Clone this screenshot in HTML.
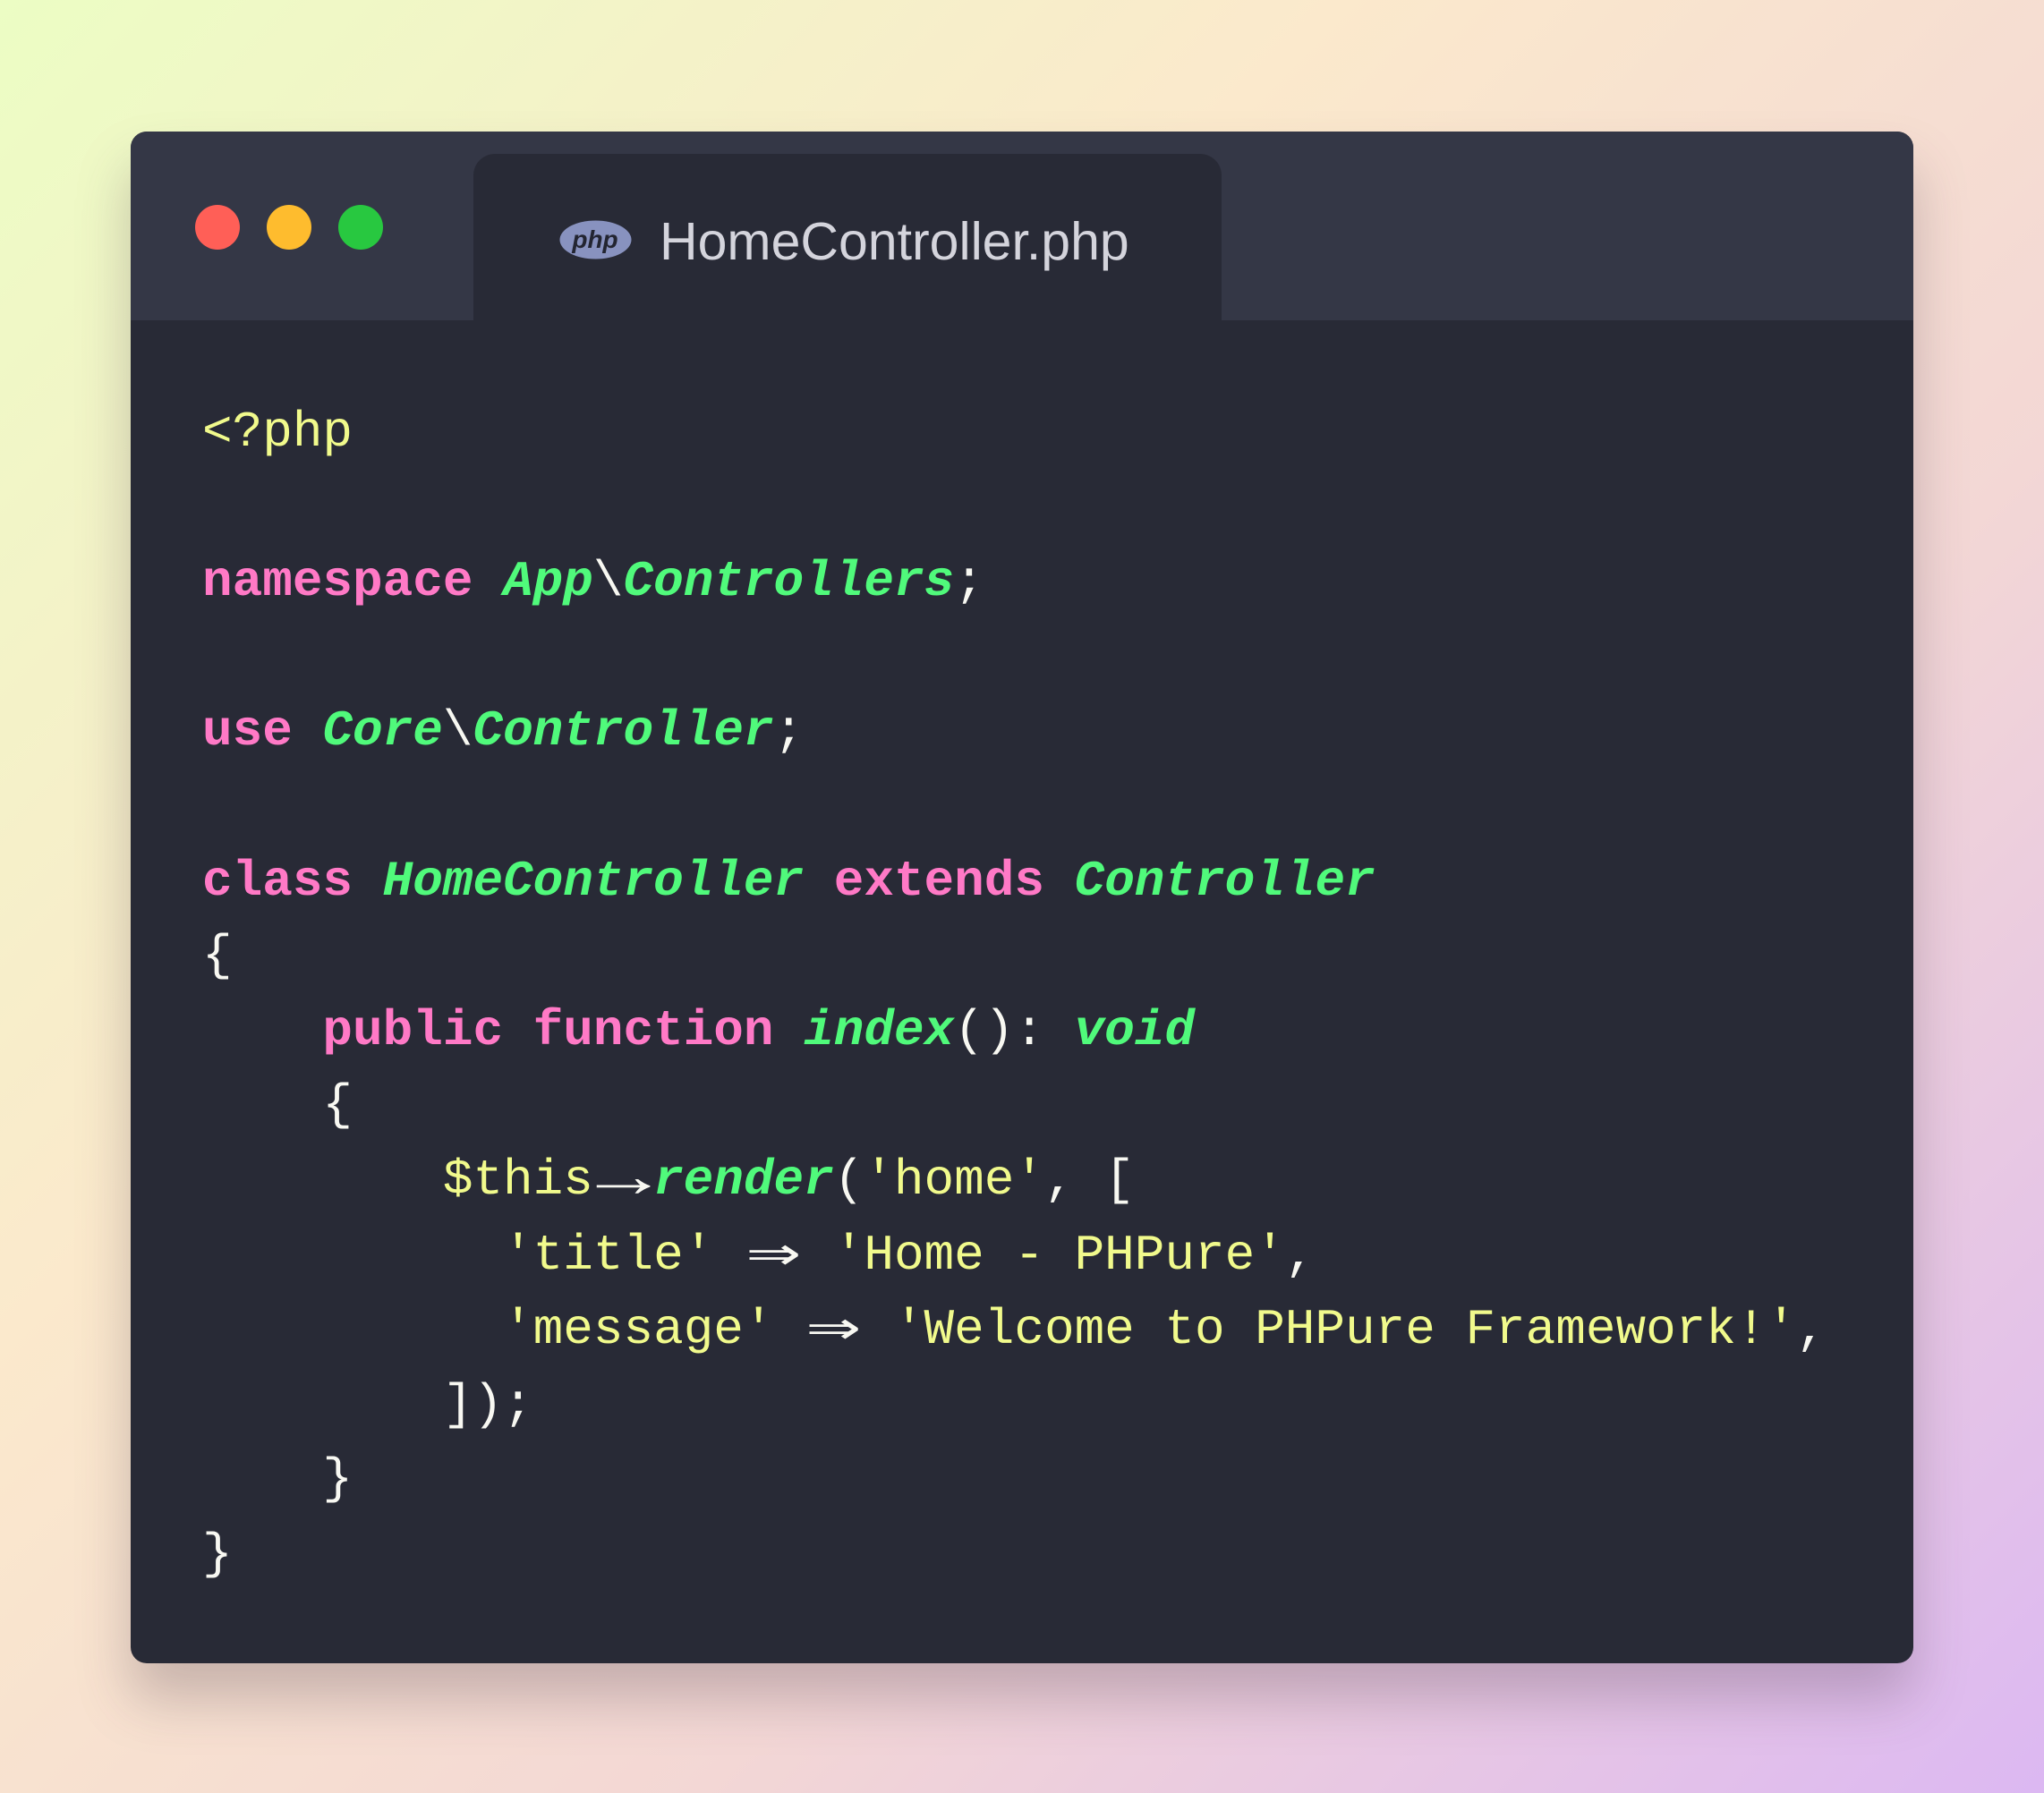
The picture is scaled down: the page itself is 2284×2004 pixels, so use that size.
<!DOCTYPE html>
<html><head><meta charset="utf-8"><style>
html,body{margin:0;padding:0}
body{width:2284px;height:2004px;position:relative;overflow:hidden;
background:linear-gradient(135deg,#ecfdc4 0%,#fbe9cc 35%,#f3d7d5 65%,#dcb8f2 100%);}
.win{position:absolute;left:146px;top:147px;width:1992px;height:1712px;background:#282a36;border-radius:18px;overflow:hidden;
box-shadow:0 40px 60px rgba(80,60,80,0.28);}
.bar{position:absolute;left:0;top:0;width:100%;height:211px;background:#343746;}
.dot{position:absolute;top:229px;width:50px;height:50px;border-radius:50%}
.tab{position:absolute;left:383px;top:25px;width:836px;height:200px;background:#282a36;border-radius:24px 24px 0 0}
.fn{position:absolute;left:591px;top:89px;font:59px "Liberation Sans",sans-serif;color:#d4d4dc;white-space:nowrap}
pre{position:absolute;left:80px;top:295px;margin:0;font:56px/83.6px "Liberation Mono",monospace;color:#f8f8f2}
.k{color:#ff79c6;font-weight:bold}.g{color:#50fa7b;font-style:italic;font-weight:bold}.y{color:#f1fa8c}
.a{display:inline-block;width:2ch;text-align:center;transform:scale(1.8,1.2)}
</style></head><body>
<div class="win">
<div class="bar"></div>
<div class="tab"></div>
<svg style="position:absolute;left:479px;top:99px" width="81" height="44" viewBox="0 0 81 44"><ellipse cx="40.5" cy="22" rx="40" ry="21.5" fill="#8892bf"/><text x="40" y="31" text-anchor="middle" font-family="Liberation Sans" font-weight="bold" font-style="italic" font-size="28" fill="#232531">php</text></svg>
<div class="fn">HomeController.php</div>
<pre><span class="y">&lt;?php</span>

<span class="k">namespace</span> <span class="g">App</span>\<span class="g">Controllers</span>;

<span class="k">use</span> <span class="g">Core</span>\<span class="g">Controller</span>;

<span class="k">class</span> <span class="g">HomeController</span> <span class="k">extends</span> <span class="g">Controller</span>
{
    <span class="k">public</span> <span class="k">function</span> <span class="g">index</span>(): <span class="g">void</span>
    {
        <span class="y">$this</span><span class="a">→</span><span class="g">render</span>(<span class="y">'home'</span>, [
          <span class="y">'title'</span> <span class="a">⇒</span> <span class="y">'Home - PHPure'</span>,
          <span class="y">'message'</span> <span class="a">⇒</span> <span class="y">'Welcome to PHPure Framework!'</span>,
        ]);
    }
}</pre>
</div>
<div class="dot" style="left:218px;background:#ff5f57"></div>
<div class="dot" style="left:298px;background:#febc2e"></div>
<div class="dot" style="left:378px;background:#28c840"></div>
</body></html>
